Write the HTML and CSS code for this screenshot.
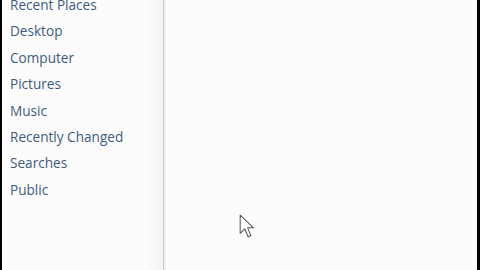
FILE: index.html
```html
<!DOCTYPE html>
<html lang="en">
<head>
    <meta charset="UTF-8">
    <title>Explorer</title>
    <link rel="stylesheet" href="styles.css">
</head>
<body>
    <div class="window">
        <nav class="nav-pane">
            <ul class="nav-list">
                <li>Recent Places</li>
                <li>Desktop</li>
                <li>Computer</li>
                <li>Pictures</li>
                <li>Music</li>
                <li>Recently Changed</li>
                <li>Searches</li>
                <li>Public</li>
            </ul>
        </nav>
        <div class="splitter"></div>
        <main class="content">
            <svg class="cursor" width="16" height="25" viewBox="0 0 14 22">
                <path d="M1 1 L1 17 L5 13 L8 20 L10.5 19 L7.5 12 L12.5 12 Z" fill="#fff" stroke="#555" stroke-width="0.9" stroke-linejoin="round"/>
            </svg>
        </main>
    </div>
</body>
</html>
```

FILE: styles.css
```css
body {
    margin: 0;
    background-color: #000;
    font-family: "Open Sans", "Noto Sans", sans-serif;
}

.window {
    display: flex;
    height: 270px;
    margin-left: 2px;
    margin-right: 3px;
    background-color: #fcfcfc;
}

.nav-pane {
    width: 148px;
    padding-left: 8px;
    padding-right: 5px;
    background: linear-gradient(to right, #fcfcfc 90%, #f3f3f3);
    overflow: hidden;
}

.nav-list {
    list-style: none;
    margin: -8px 0 0 0;
    padding: 0;
}

.nav-list li {
    height: 26.4px;
    line-height: 26px;
    font-size: 13.6px;
    color: #3e5b7f;
    white-space: nowrap;
}

.splitter {
    width: 1px;
    background-color: #c9c9c9;
    border-right: 2px solid #f2f2f2;
}

.content {
    flex: 1;
    position: relative;
    background-color: #fcfcfc;
}

.cursor {
    position: absolute;
    left: 73px;
    top: 214px;
}
```
